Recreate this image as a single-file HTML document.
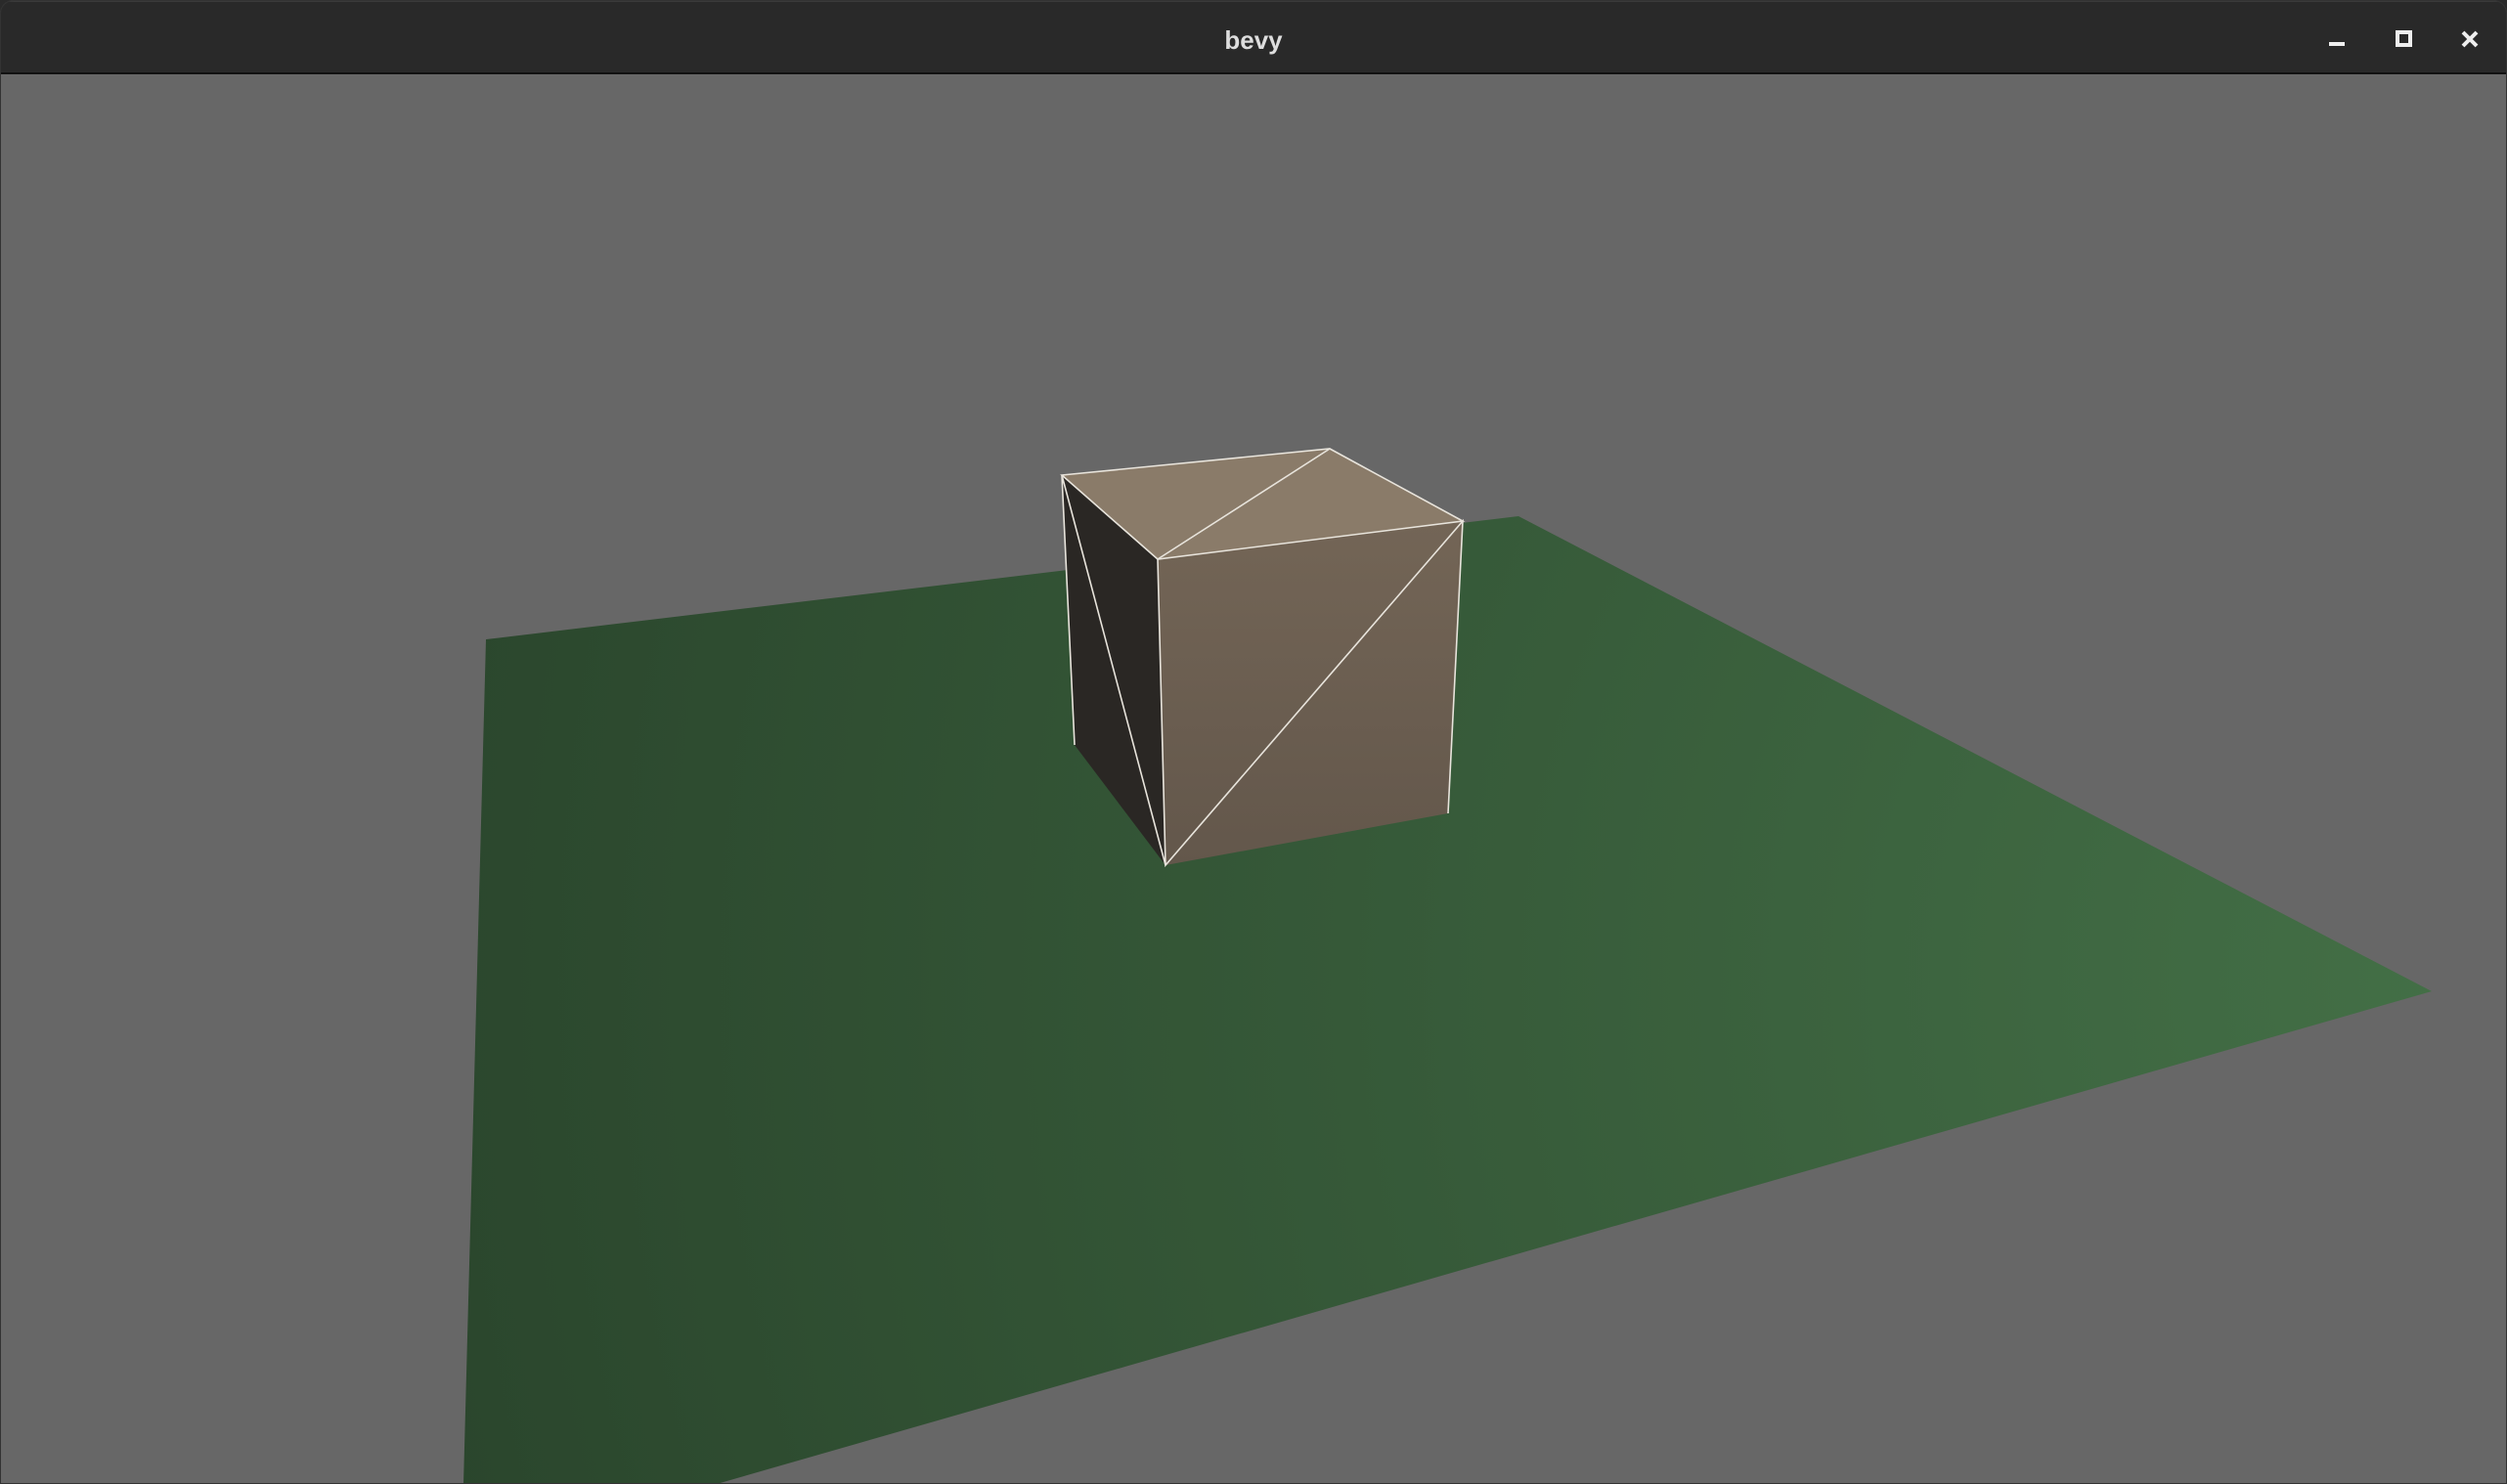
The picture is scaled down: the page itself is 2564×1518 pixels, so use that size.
<!DOCTYPE html>
<html><head><style>
html,body{margin:0;padding:0;background:#2a2a2a;}
body{width:2564px;height:1518px;position:relative;overflow:hidden;}
.win{position:absolute;left:0;top:0;width:2564px;height:1518px;background:#676767;border-radius:14px 14px 0 0;overflow:hidden;}
.bar{position:absolute;left:0;top:0;width:2564px;height:76px;background:#292929;border-bottom:2px solid #111;border-top:2px solid #3a3a3a;box-sizing:border-box;}
.title{position:absolute;left:0;width:2564px;top:24px;text-align:center;color:#ddd;font:bold 26px "Liberation Sans",sans-serif;}
svg.scene{position:absolute;left:0;top:76px;}
.edge{position:absolute;left:0;top:0;width:2564px;height:1518px;box-sizing:border-box;border:1px solid #333;border-radius:14px 14px 0 0;pointer-events:none;}
</style></head><body>
<div class="win">
<div class="bar">
<div class="title">bevy</div>
<svg width="2564" height="76" style="position:absolute;left:0;top:0">
<rect x="2382" y="41" width="16" height="4" fill="#eee"/>
<rect x="2452" y="31" width="13" height="13" fill="none" stroke="#eee" stroke-width="4"/>
<path d="M2519 31 L2533 45 M2533 31 L2519 45" stroke="#eee" stroke-width="4"/>
</svg>
</div>
<svg class="scene" width="2564" height="1442" viewBox="0 76 2564 1442">
<defs>
<radialGradient id="g" cx="2500" cy="1000" r="2300" gradientUnits="userSpaceOnUse">
<stop offset="0" stop-color="#436f46"/><stop offset="1" stop-color="#28422a"/>
</radialGradient>
<linearGradient id="f" x1="0" y1="535" x2="0" y2="885" gradientUnits="userSpaceOnUse">
<stop offset="0" stop-color="#736556"/><stop offset="1" stop-color="#63574b"/>
</linearGradient>
</defs>
<polygon points="497,654 1553,528 2487,1014 733,1518 474,1518" fill="url(#g)"/>
<polygon points="1086,486 1184,572 1192,885 1099,762" fill="#2a2724"/>
<polygon points="1086,486 1360,459 1496,533 1184,572" fill="#8a7b69"/>
<polygon points="1184,572 1496,533 1481,832 1192,885" fill="url(#f)"/>
<g stroke="#e8e4dc" stroke-width="1.6" fill="none">
<polygon points="1086,486 1360,459 1496,533 1184,572"/>
<path d="M1184,572 L1360,459 M1086,486 L1099,762 M1086,486 L1192,885 M1184,572 L1192,885 L1496,533 L1481,832"/>
</g>
</svg>
<div class="edge"></div>
</div>
</body></html>
